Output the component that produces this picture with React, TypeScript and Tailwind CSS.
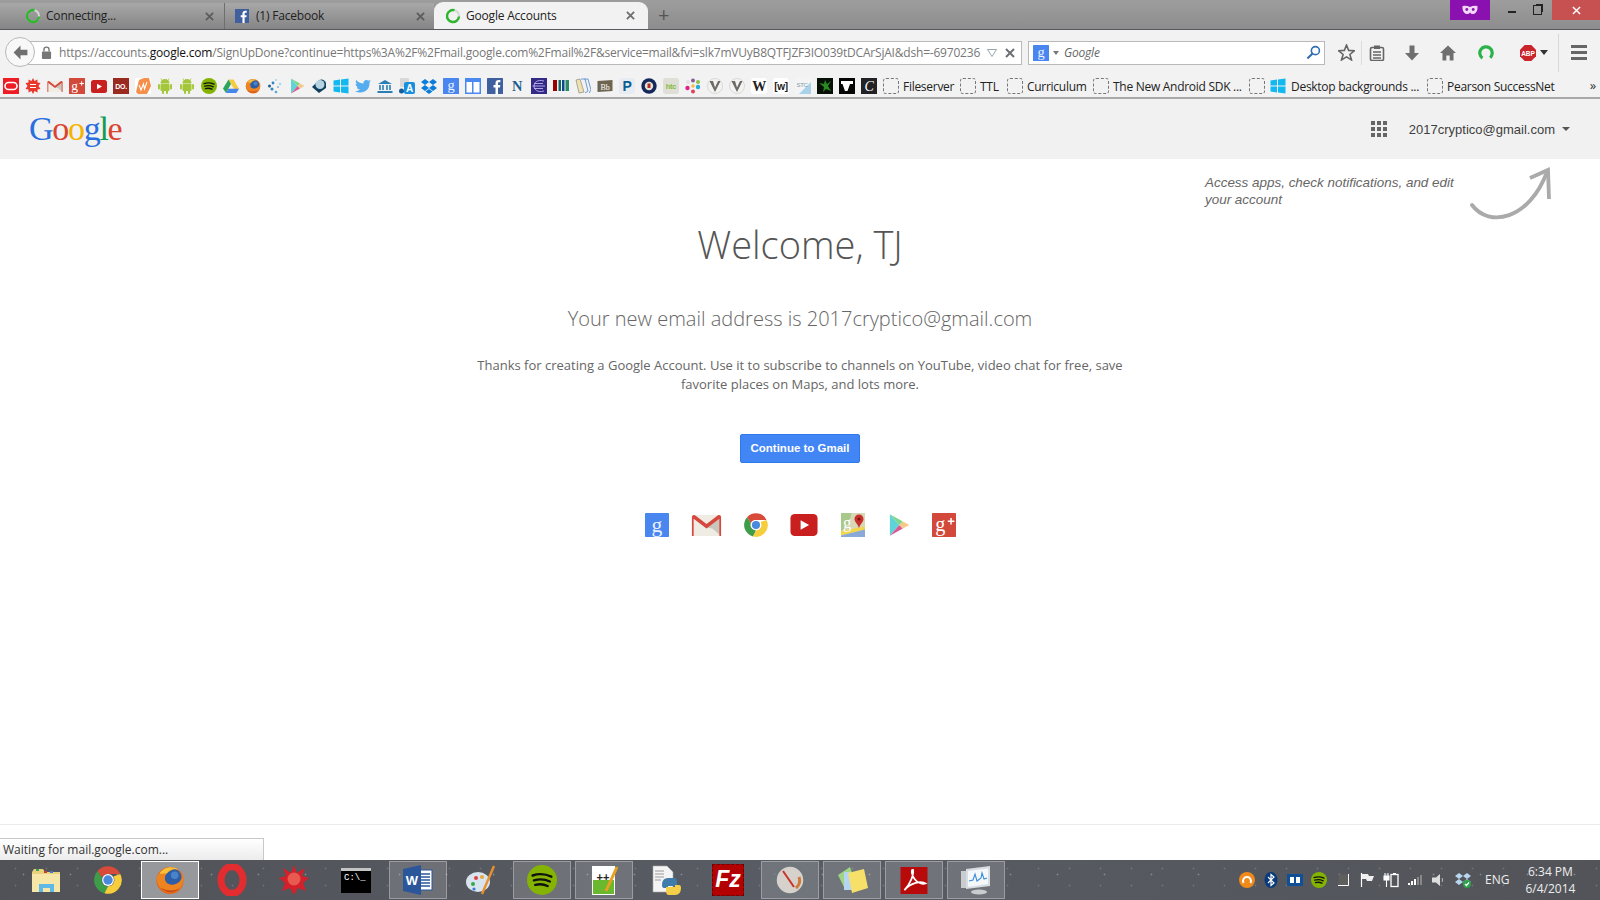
import React from "react";

type IconProps = { className?: string };

function GIcon({ className = "w-4 h-4" }: IconProps) {
    return (
        <svg viewBox="0 0 16 16" className={className}>
            <rect width="16" height="16" rx="0.5" fill="#4a86f0" />
            <text x="8" y="12.4" textAnchor="middle" fontSize="14.4" fontFamily="Liberation Serif, serif" fill="#eaf1ff">
                g
            </text>
        </svg>
    );
}

function GmailIcon({ className = "w-4 h-4" }: IconProps) {
    return (
        <svg viewBox="0 0 16 12" className={className}>
            <rect x="0.5" y="0.5" width="15" height="11" rx="0.8" fill="#efece4" />
            <path d="M8 7 L15 1 V11 L11 7.5 Z" fill="#c9c6bd" />
            <path d="M1.3 11.5 V2.5 L8 7.6 L14.7 2.5 V11.5 H15.6 V1.4 Q15.4 0.3 14 0.6 L8 5.2 L2 0.6 Q0.6 0.3 0.4 1.4 V11.5 Z" fill="#d6483e" />
        </svg>
    );
}

function ChromeIcon({ className = "w-4 h-4" }: IconProps) {
    return (
        <svg viewBox="0 0 16 16" className={className}>
            <path d="M8 0.2 A7.8 7.8 0 0 1 15 4.6 H8 A3.6 3.6 0 0 0 4.6 6.7 L2 2.9 A7.8 7.8 0 0 1 8 0.2 Z" fill="#d84a3a" />
            <path d="M2 2.9 L4.6 6.7 A3.6 3.6 0 0 0 8 11.6 L6 15.6 A7.8 7.8 0 0 1 2 2.9 Z" fill="#3f9d4a" />
            <path d="M15 4.6 A7.8 7.8 0 0 1 6 15.6 L8 11.6 A3.6 3.6 0 0 0 11 6 Z" fill="#f6cd3a" />
            <circle cx="8" cy="8" r="3.4" fill="#fff" />
            <circle cx="8" cy="8" r="2.7" fill="#4a89dc" />
        </svg>
    );
}

function YoutubeIcon({ className = "w-4 h-4" }: IconProps) {
    return (
        <svg viewBox="0 0 16 13" className={className}>
            <rect width="16" height="13" y="0" rx="2.5" fill="#c9201f" />
            <path d="M6 3.7 L11 6.5 L6 9.3 Z" fill="#fff" />
        </svg>
    );
}

function GplusIcon({ className = "w-4 h-4" }: IconProps) {
    return (
        <svg viewBox="0 0 16 16" className={className}>
            <rect width="16" height="16" rx="0.5" fill="#d2483a" />
            <text x="5.6" y="12" textAnchor="middle" fontSize="13.5" fontFamily="Liberation Serif, serif" fill="#fff">
                g
            </text>
            <path d="M10.5 5.5 h4.4 M12.7 3.3 v4.4" stroke="#fff" strokeWidth="1" />
        </svg>
    );
}

function PlayIcon({ className = "w-4 h-4" }: IconProps) {
    return (
        <svg viewBox="0 0 16 16" className={className}>
            <path d="M2 0.5 L8.5 8 L2 15.5 Z" fill="#5fd3d8" />
            <path d="M2 0.5 L11 5.5 L8.5 8 Z" fill="#7ed68a" />
            <path d="M2 15.5 L11 10.5 L8.5 8 Z" fill="#d85a93" />
            <path d="M11 5.5 L15.5 8 L11 10.5 L8.5 8 Z" fill="#f5c98a" />
        </svg>
    );
}

function MapsIcon({ className = "w-4 h-4" }: IconProps) {
    return (
        <svg viewBox="0 0 16 16" className={className}>
            <rect width="16" height="16" fill="#d8d8b8" />
            <path d="M0 0 H7 L5 9 L0 12 Z" fill="#a9c98a" />
            <path d="M0 12 L16 9 V11 L0 15 Z" fill="#f4d649" />
            <path d="M0 15 L16 11 V16 H0 Z" fill="#8aa8d8" />
            <text x="4" y="10" textAnchor="middle" fontSize="11" fontFamily="Liberation Serif, serif" fill="#fff">
                g
            </text>
            <path d="M12 1 a3 3 0 0 1 3 3 c0 2 -2 3 -3 6 c-1 -3 -3 -4 -3 -6 a3 3 0 0 1 3 -3 Z" fill="#c9302c" />
            <circle cx="12" cy="4" r="1" fill="#7a1512" />
        </svg>
    );
}

function FirefoxIcon({ className = "w-4 h-4" }: IconProps) {
    return (
        <svg viewBox="0 0 32 32" className={className}>
            <circle cx="16" cy="16.5" r="14.5" fill="#e2681c" />
            <circle cx="18" cy="14" r="10.5" fill="#2d5ea8" />
            <circle cx="21" cy="11" r="4" fill="#4a84c8" />
            <path d="M1.8 14 C2 26 14 33 24 27 C30 23 32 14 29.5 8 C29.5 16 25 21 18 21 C12 21 9.5 16.5 11 11.5 C12.5 8 15.5 6 19 5 C13 1 4 6 1.8 14 Z" fill="#ee8420" />
            <path d="M5 9 C9 2 19 0.5 25 5 C20 3.5 15 5 12.5 9 C10 9 7 9.5 5 9 Z" fill="#f7c23a" />
            <path d="M6 24 C11 30 20 31 26 25 C20 28 12 28 6 24 Z" fill="#c94a14" />
        </svg>
    );
}

function SpotifyIcon({ className = "w-4 h-4" }: IconProps) {
    return (
        <svg viewBox="0 0 16 16" className={className}>
            <circle cx="8" cy="8" r="8" fill="#84b401" />
            <path d="M3 5.6 C6 4.6 10 4.8 13 6.2 M3.7 8.2 C6.5 7.4 9.7 7.6 12.2 8.8 M4.4 10.6 C6.7 10 9 10.2 11 11.2" stroke="#111" strokeWidth="1.3" fill="none" strokeLinecap="round" />
        </svg>
    );
}

function AndroidIcon({ className = "w-4 h-4" }: IconProps) {
    return (
        <svg viewBox="0 0 16 16" className={className}>
            <path d="M3.5 5.5 a4.5 4.5 0 0 1 9 0 Z" fill="#a4c639" />
            <path d="M4.8 2 L3.8 0.4 M11.2 2 L12.2 0.4" stroke="#a4c639" strokeWidth="0.7" />
            <rect x="3.5" y="6" width="9" height="7" rx="1" fill="#a4c639" />
            <rect x="1" y="6" width="1.9" height="5.5" rx="0.9" fill="#a4c639" />
            <rect x="13.1" y="6" width="1.9" height="5.5" rx="0.9" fill="#a4c639" />
            <rect x="5" y="12" width="2" height="4" rx="1" fill="#a4c639" />
            <rect x="9" y="12" width="2" height="4" rx="1" fill="#a4c639" />
        </svg>
    );
}

function WindowsIcon({ className = "w-4 h-4" }: IconProps) {
    return (
        <svg viewBox="0 0 16 16" className={className}>
            <path d="M0.5 2.5 L7 1.6 V7.5 H0.5 Z M8 1.4 L15.5 0.4 V7.5 H8 Z M0.5 8.5 H7 V14.4 L0.5 13.5 Z M8 8.5 H15.5 V15.6 L8 14.6 Z" fill="#12b8ef" />
        </svg>
    );
}

function DashedIcon() {
    return <span className="w-4 h-4 rounded-[3px] border border-dashed border-[#777] shrink-0" />;
}

function SpinnerRing({ className = "w-4 h-4" }: IconProps) {
    return (
        <svg viewBox="0 0 16 16" className={className}>
            <circle cx="8" cy="8" r="6" fill="none" stroke="#d4d9d4" strokeWidth="2" />
            <path d="M9.5 2.2 A6 6 0 1 0 14 8.5" fill="none" stroke="#2fb62f" strokeWidth="2.4" />
        </svg>
    );
}

function LetterIcon({ bg, color, text, size = 9, serif, rounded }: { bg: string; color: string; text: string; size?: number; serif?: boolean; rounded?: boolean }) {
    return (
        <svg viewBox="0 0 16 16" className="w-4 h-4">
            <rect width="16" height="16" rx={rounded ? 3 : 0} fill={bg} />
            <text
                x="8"
                y={8 + size * 0.36}
                textAnchor="middle"
                fontSize={size}
                fontWeight="700"
                fontFamily={serif ? "Liberation Serif, serif" : "Liberation Sans, sans-serif"}
                fill={color}
            >
                {text}
            </text>
        </svg>
    );
}

function Svg16({ children }: { children: React.ReactNode }) {
    return (
        <svg viewBox="0 0 16 16" className="w-4 h-4">
            {children}
        </svg>
    );
}

const VShield = (
    <Svg16>
        <circle cx="8" cy="8" r="7.5" fill="#f3f3f1" stroke="#c8c8c8" strokeWidth="0.6" />
        <path d="M2.5 3 L8 14 L13.5 3 H11 L8 9.5 L6 3 Z" fill="#6e6a66" />
    </Svg16>
);

const bookmarkIcons: React.ReactNode[] = [
    <Svg16>
        <rect width="16" height="16" fill="#ee1c25" />
        <rect x="2" y="4.5" width="12" height="7" rx="3.5" fill="none" stroke="#fff" strokeWidth="1.6" />
    </Svg16>,
    <Svg16>
        <path d="M8 0 L9.5 3 L12.5 1.5 L12.5 4.5 L15.5 5 L13.5 8 L15.5 11 L12.5 11.5 L12.5 14.5 L9.5 13 L8 16 L6.5 13 L3.5 14.5 L3.5 11.5 L0.5 11 L2.5 8 L0.5 5 L3.5 4.5 L3.5 1.5 L6.5 3 Z" fill="#e8392b" />
        <path d="M5 6.5 H11 M5 9.5 H11" stroke="#fff" strokeWidth="1.2" />
    </Svg16>,
    <GmailIcon className="w-4 h-[13px]" />,
    <GplusIcon />,
    <YoutubeIcon className="w-4 h-[13px]" />,
    <LetterIcon bg="#9a2a20" color="#fff" text="DO." size={7} />,
    <Svg16>
        <rect width="16" height="16" fill="#fff" />
        <path d="M1 14 L4 2 L9 0 L14 0 L16 8 L12 16 H3 Z" fill="#f58f4a" />
        <path d="M4 7 L6 12 L8.5 6 L9.5 11 L12 4" fill="none" stroke="#fff" strokeWidth="1.1" />
    </Svg16>,
    <AndroidIcon />,
    <AndroidIcon />,
    <SpotifyIcon />,
    <Svg16>
        <path d="M5.5 1.5 H10.5 L16 11 H11 Z" fill="#f7c93e" />
        <path d="M5.5 1.5 L8 6 L3 15 L0 10.5 Z" fill="#2aa55a" />
        <path d="M3 15 L5.5 10.8 H16 L13.4 15 Z" fill="#4585ee" />
    </Svg16>,
    <FirefoxIcon />,
    <Svg16>
        <circle cx="2.5" cy="8" r="1.5" fill="#1f5c8f" />
        <circle cx="5" cy="11" r="1.5" fill="#2e83c1" />
        <circle cx="9" cy="14" r="1.3" fill="#55a5dc" />
        <circle cx="9" cy="2" r="1.1" fill="#a9d5ee" />
        <circle cx="13" cy="6" r="1.3" fill="#a9d5ee" />
        <circle cx="11" cy="9" r="1.1" fill="#7dbbe3" />
        <circle cx="6" cy="5" r="1.4" fill="#2e83c1" />
    </Svg16>,
    <PlayIcon />,
    <Svg16>
        <path d="M1 9 L8 2 Q13 0 15 5 L15 10 L8 15 Z" fill="#10405e" />
        <circle cx="9" cy="6.5" r="4.5" fill="#b7d3e2" />
    </Svg16>,
    <WindowsIcon />,
    <Svg16>
        <path d="M16 3 C15 3.6 14.6 3.7 14 3.8 C14.8 3.3 15.3 2.6 15.5 1.8 C14.8 2.3 14 2.6 13.2 2.7 C11.5 1 8 2.4 8.5 5.6 C5.5 5.5 3 4 1.2 2 C0.4 3.5 0.8 5.3 2.2 6.2 C1.6 6.2 1.1 6 0.6 5.8 C0.6 7.5 1.7 8.8 3.3 9.2 C2.8 9.3 2.3 9.4 1.8 9.3 C2.2 10.6 3.5 11.6 5 11.6 C3.5 12.8 1.8 13.2 0 13.1 C7 17 15 13 14.5 4.6 C15.1 4.2 15.6 3.6 16 3 Z" fill="#55acee" />
    </Svg16>,
    <Svg16>
        <path d="M8 2 L15 6 H1 Z" fill="#2a7fb5" />
        <path d="M3 7 v5 M6 7 v5 M10 7 v5 M13 7 v5" stroke="#2a7fb5" strokeWidth="1.6" />
        <rect x="0.5" y="13" width="15" height="2" fill="#2a7fb5" />
    </Svg16>,
    <Svg16>
        <rect x="1" y="0" width="9" height="9" rx="1" fill="#d8d8d8" />
        <rect x="5" y="4" width="11" height="12" rx="2" fill="#1a8fdc" />
        <circle cx="2.5" cy="13" r="2.5" fill="#105ea0" />
        <text x="10.5" y="14" textAnchor="middle" fontSize="10" fontWeight="700" fontFamily="Liberation Sans, sans-serif" fill="#fff">
            A
        </text>
    </Svg16>,
    <Svg16>
        <path d="M4 1 L8 4 L4 7 L0 4 Z M12 1 L16 4 L12 7 L8 4 Z M4 7 L8 10 L4 13 L0 10 Z M12 7 L16 10 L12 13 L8 10 Z M4.5 13.5 L8 11 L11.5 13.5 L8 16 Z" fill="#0a7ddb" />
    </Svg16>,
    <GIcon />,
    <Svg16>
        <rect width="16" height="16" fill="#4a8af0" />
        <rect x="1.5" y="4" width="5.5" height="10.5" fill="#fff" />
        <rect x="8.5" y="4" width="6" height="10.5" fill="#fff" />
    </Svg16>,
    <Svg16>
        <rect width="16" height="16" rx="0.5" fill="#3f5f9f" />
        <path d="M11 16 V9.5 H13 L13.3 7 H11 V5.5 C11 4.7 11.3 4.2 12.3 4.2 H13.4 V2 C13 2 12.4 1.9 11.6 1.9 C9.8 1.9 8.5 3 8.5 5.1 V7 H6.5 V9.5 H8.5 V16 Z" fill="#fff" />
    </Svg16>,
    <LetterIcon bg="#f2f2f2" color="#1d5c8f" text="N" size={14.4} serif />,
    <Svg16>
        <rect width="16" height="16" fill="#332a86" />
        <path d="M13 3 C6 1 3 5 3 8 C3 11 6 15 13 13 M1.5 8 H14 M3 5.5 H12 M3 10.5 H12" stroke="#bfb3f0" strokeWidth="0.9" fill="none" />
    </Svg16>,
    <Svg16>
        <rect y="2" width="4" height="11" fill="#900" />
        <rect x="5.5" y="2" width="2.5" height="11" fill="#0a6b6b" />
        <rect x="9" y="2" width="2.5" height="11" fill="#148" />
        <rect x="12.5" y="2" width="3.5" height="11" fill="#2a8a6a" />
    </Svg16>,
    <Svg16>
        <path d="M1 2 L5 1 L9 14 L4 15 Z" fill="#f0e2b0" stroke="#777" strokeWidth="0.6" />
        <path d="M6 1 L10 1 L13 13 L10 15 M9.5 1 L13 1 L16 12 L14 15" fill="none" stroke="#5c8fd0" strokeWidth="0.9" />
    </Svg16>,
    <Svg16>
        <path d="M0.5 3 L15.5 2 V13 L0.5 14 Z" fill="#6e6550" />
        <text x="8" y="11.5" textAnchor="middle" fontSize="8" fontFamily="Liberation Serif, serif" fill="#fff">
            Bb
        </text>
    </Svg16>,
    <LetterIcon bg="#e6ecf1" color="#0d5d91" text="P" size={14} rounded />,
    <Svg16>
        <circle cx="8" cy="8" r="7.7" fill="#14285c" />
        <circle cx="8" cy="8" r="4.2" fill="#e8e4d2" />
        <rect x="6.5" y="5.5" width="3" height="4.5" fill="#b02a2a" />
    </Svg16>,
    <LetterIcon bg="#dfdfd8" color="#86ba3c" text="htc" size={7.5} rounded />,
    <Svg16>
        <circle cx="3" cy="4" r="2" fill="#e3e3e3" />
        <circle cx="8" cy="2.5" r="2" fill="#8a5a9a" />
        <circle cx="13" cy="4" r="2" fill="#8ac24a" />
        <circle cx="2.5" cy="10" r="2.2" fill="#e0208a" />
        <circle cx="8" cy="8" r="1.8" fill="#f0c040" />
        <circle cx="13" cy="9" r="2.2" fill="#26a8e0" />
        <circle cx="8" cy="13.5" r="2" fill="#e04060" />
    </Svg16>,
    VShield,
    VShield,
    <LetterIcon bg="#ffffff" color="#222" text="W" size={14} serif rounded />,
    <LetterIcon bg="#ffffff" color="#222" text="[w]" size={10} rounded />,
    <Svg16>
        <rect width="16" height="16" fill="#f4f4f4" />
        <path d="M4 16 L16 4 V16 Z" fill="#a8d2ea" />
        <text x="7" y="9" textAnchor="middle" fontSize="6" fontFamily="Liberation Sans, sans-serif" fill="#7b98aa">
            STC
        </text>
    </Svg16>,
    <Svg16>
        <rect width="16" height="16" fill="#061006" />
        <path d="M8 2 L10 6 L14 3 L11 8 L14 13 L9 11 L6 14 L7 9 L2 5 L7 6 Z" fill="#2a8a22" />
    </Svg16>,
    <Svg16>
        <rect width="16" height="16" fill="#050505" />
        <path d="M2 3 H14 V6 H11 L8.5 13 H6 L3.5 6 H2 Z" fill="#fff" />
    </Svg16>,
    <Svg16>
        <rect width="16" height="16" fill="#222226" />
        <text x="8" y="13" textAnchor="middle" fontSize="14" fontStyle="italic" fontFamily="Liberation Serif, serif" fill="#fff">
            C
        </text>
    </Svg16>,
];

function TabClose({ color }: { color: string }) {
    return (
        <svg viewBox="0 0 10 10" className="w-[9px] h-[9px] shrink-0">
            <path d="M1 1 L9 9 M9 1 L1 9" stroke={color} strokeWidth="2" />
        </svg>
    );
}

function TabStrip() {
    return (
        <div className="h-[30px] bg-gradient-to-b from-[#9d9d9d] to-[#8d8d8d] border-b border-[#55585c] flex text-[12px] tracking-[-0.2px] text-[#222] font-['Open_Sans',sans-serif] shrink-0">
            <div className="w-[225px] h-[26px] mt-[3px] flex items-center pl-[25px] border-r border-[#6e6e6e] bg-gradient-to-b from-[#a8a8a8] to-[#858585]">
                <SpinnerRing className="w-[16px] h-[16px]" />
                <span className="ml-[5px] w-[159px]">Connecting...</span>
                <TabClose color="#5c5c5c" />
            </div>
            <div className="w-[209px] h-[26px] mt-[3px] flex items-center pl-[10px] bg-gradient-to-b from-[#a8a8a8] to-[#858585]">
                <svg viewBox="0 0 16 16" className="w-[14px] h-[16px]">
                    <rect width="16" height="16" fill="#3f5f9f" />
                    <path d="M11 16 V9.5 H13 L13.3 7 H11 V5.5 C11 4.7 11.3 4.2 12.3 4.2 H13.4 V2 C13 2 12.4 1.9 11.6 1.9 C9.8 1.9 8.5 3 8.5 5.1 V7 H6.5 V9.5 H8.5 V16 Z" fill="#fff" />
                </svg>
                <span className="ml-[7px] w-[160px]">(1) Facebook</span>
                <TabClose color="#5c5c5c" />
            </div>
            <div className="w-[214px] h-[27px] mt-[2px] flex items-center pl-[11px] bg-[#f2f2f2] rounded-t-[9px]">
                <SpinnerRing className="w-[16px] h-[16px]" />
                <span className="ml-[5px] w-[160px]">Google Accounts</span>
                <TabClose color="#6e6e6e" />
            </div>
            <span className="ml-[10px] mt-[2px] text-[#555] text-[20px] leading-[26px]">+</span>
            <div className="ml-auto flex items-start h-[20px]">
                <div className="w-[40px] h-[20px] bg-[#8a10b0] flex items-center justify-center">
                    <svg viewBox="0 0 16 10" className="w-[16px] h-[10px]">
                        <path d="M0.5 1 Q4 0 8 2 Q12 0 15.5 1 Q16 7 12 9 Q9 9.5 8 7.5 Q7 9.5 4 9 Q0 7 0.5 1 Z" fill="#f1d8f8" />
                        <circle cx="4.8" cy="4.5" r="1.4" fill="#8a10b0" />
                        <circle cx="11.2" cy="4.5" r="1.4" fill="#8a10b0" />
                    </svg>
                </div>
                <div className="w-[62px] flex items-center h-[20px] text-[#222]">
                    <span className="ml-[18px] mt-[3px] w-[8px] h-[2px] bg-[#222]" />
                    <span className="ml-[17px] w-[9px] h-[10px] border border-[#222] shadow-[2px_-2px_0_-1px_#222]" />
                </div>
                <div className="w-[48px] h-[20px] bg-[#c75050] flex items-center justify-center">
                    <svg viewBox="0 0 10 10" className="w-[9px] h-[9px]">
                        <path d="M1 1 L9 9 M9 1 L1 9" stroke="#fff" strokeWidth="1.6" />
                    </svg>
                </div>
            </div>
        </div>
    );
}

function NavBar() {
    return (
        <div className="h-[42px] pt-[3px] bg-[#f2f2f2] flex items-center relative shrink-0 font-['Open_Sans',sans-serif]">
            <div className="absolute left-[5px] top-[7px] w-[30px] h-[30px] rounded-full bg-[#f8f8f8] border border-[#b8b8b8] flex items-center justify-center z-10">
                <svg viewBox="0 0 16 16" className="w-[17px] h-[17px]">
                    <path d="M8 1.5 L1.5 8 L8 14.5 V10.5 H14.5 V5.5 H8 Z" fill="#707070" />
                </svg>
            </div>
            <div className="ml-[28px] w-[994px] h-[24px] bg-white border border-[#b9b9b9] flex items-center pl-[12px] pr-[5px]">
                <svg viewBox="0 0 12 14" className="w-[11px] h-[13px] shrink-0">
                    <rect x="1" y="6" width="10" height="8" rx="1" fill="#777" />
                    <path d="M3.2 6 V4 a2.8 2.8 0 0 1 5.6 0 V6" fill="none" stroke="#777" strokeWidth="1.5" />
                </svg>
                <span className="ml-[7px] w-[923px] text-[12px] tracking-[-0.2px] text-[#777] whitespace-nowrap">
                    https://accounts.<span className="text-[#111]">google.com</span>/SignUpDone?continue=https%3A%2F%2Fmail.google.com%2Fmail%2F&service=mail&fvi=slk7mVUyB8QTFJZF3IO039tDCArSjAI&dsh=-6970236
                </span>
                <svg viewBox="0 0 10 8" className="ml-[5px] w-[10px] h-[8px] shrink-0">
                    <path d="M0.5 0.5 H9.5 L5 7.5 Z" fill="none" stroke="#9aa5ad" />
                </svg>
                <svg viewBox="0 0 10 10" className="ml-[8px] w-[10px] h-[10px] shrink-0">
                    <path d="M1 1 L9 9 M9 1 L1 9" stroke="#6a7076" strokeWidth="2" />
                </svg>
            </div>
            <div className="ml-[6px] w-[297px] h-[24px] bg-white border border-[#b9b9b9] flex items-center pl-[4px] pr-[3px]">
                <GIcon />
                <span className="ml-[4px] w-0 h-0 border-x-[3px] border-x-transparent border-t-[4px] border-t-[#777]" />
                <span className="ml-[5px] flex-1 text-[12px] tracking-[-0.2px] italic text-[#666]">Google</span>
                <svg viewBox="0 0 16 16" className="w-[15px] h-[15px]">
                    <circle cx="10" cy="6" r="4.3" fill="none" stroke="#2f6fb0" strokeWidth="1.7" />
                    <path d="M7 9 L1.5 14.5" stroke="#2f6fb0" strokeWidth="2.2" />
                </svg>
            </div>
            <svg viewBox="0 0 16 16" className="ml-[13px] w-[17px] h-[17px]">
                <path d="M8 1 L10 6 L15.5 6.3 L11.2 9.8 L12.7 15 L8 12.1 L3.3 15 L4.8 9.8 L0.5 6.3 L6 6 Z" fill="none" stroke="#666" strokeWidth="1.5" />
            </svg>
            <span className="ml-[6px] w-px h-[24px] bg-[#dcdcdc]" />
            <svg viewBox="0 0 16 16" className="ml-[7px] w-4 h-4">
                <rect x="1.5" y="2.5" width="13" height="13" rx="1.5" fill="none" stroke="#666" strokeWidth="1.6" />
                <rect x="5" y="0.5" width="6" height="3.5" fill="#666" />
                <path d="M4 7 H12 M4 10 H12 M4 13 H12" stroke="#666" strokeWidth="1.3" />
            </svg>
            <svg viewBox="0 0 16 16" className="ml-[19px] w-4 h-4">
                <path d="M5.5 0.5 H10.5 V8 H15 L8 15.5 L1 8 H5.5 Z" fill="#6f6f6f" />
            </svg>
            <svg viewBox="0 0 16 16" className="ml-[20px] w-4 h-4">
                <path d="M8 0.5 L16 8 H13.5 V15.5 H9.7 V10.5 H6.3 V15.5 H2.5 V8 H0 Z" fill="#6f6f6f" />
            </svg>
            <svg viewBox="0 0 16 18" className="ml-[22px] w-[16px] h-[18px]">
                <circle cx="8" cy="9" r="6.2" fill="none" stroke="#2db24a" strokeWidth="3.2" strokeDasharray="30 9" transform="rotate(125 8 9)" />
            </svg>
            <svg viewBox="0 0 16 16" className="ml-[26px] w-4 h-4">
                <path d="M4.7 0 H11.3 L16 4.7 V11.3 L11.3 16 H4.7 L0 11.3 V4.7 Z" fill="#c9252b" />
                <text x="8" y="10.5" textAnchor="middle" fontSize="6.5" fontWeight="700" fontFamily="Liberation Sans, sans-serif" fill="#fff">
                    ABP
                </text>
            </svg>
            <span className="ml-[4px] w-0 h-0 border-x-[4px] border-x-transparent border-t-[5px] border-t-[#333]" />
            <span className="ml-[10px] w-px h-[38px] bg-[#d8d8d8]" />
            <span className="ml-[12px] flex flex-col gap-[3px]">
                <span className="w-[16px] h-[3px] bg-[#666]" />
                <span className="w-[16px] h-[3px] bg-[#666]" />
                <span className="w-[16px] h-[3px] bg-[#666]" />
            </span>
        </div>
    );
}

function BookmarkLink({ icon, label, width }: { icon?: React.ReactNode; label: string; width: string }) {
    return (
        <div className={`flex items-center gap-[4px] shrink-0 ${width}`}>
            {icon ?? <DashedIcon />}
            <span className="whitespace-nowrap mt-[2px]">{label}</span>
        </div>
    );
}

function BookmarksBar() {
    return (
        <div className="h-[27px] bg-[#f2f2f2] border-b-2 border-[#a9a9a9] flex items-center pl-[3px] pt-[3px] text-[12px] tracking-[-0.28px] text-[#222] font-['Open_Sans',sans-serif] shrink-0">
            <div className="flex gap-[6px] w-[880px] shrink-0">
                {bookmarkIcons.map((icon, i) => (
                    <span key={i} className="w-4 h-4 flex items-center justify-center shrink-0">
                        {icon}
                    </span>
                ))}
            </div>
            <BookmarkLink label="Fileserver" width="w-[77px]" />
            <BookmarkLink label="TTL" width="w-[47px]" />
            <BookmarkLink label="Curriculum" width="w-[86px]" />
            <BookmarkLink label="The New Android SDK ..." width="w-[156px]" />
            <div className="flex items-center gap-[5px] w-[178px] shrink-0">
                <DashedIcon />
                <WindowsIcon />
                <span className="whitespace-nowrap mt-[2px]">Desktop backgrounds ...</span>
            </div>
            <BookmarkLink label="Pearson SuccessNet" width="w-[142px]" />
            <span className="ml-auto mr-[4px] text-[#333] text-[13px]">»</span>
        </div>
    );
}

function AccountHeader() {
    return (
        <div className="h-[60px] bg-[#f1f1f1] flex items-center pl-[29px] shrink-0">
            <div className="text-[34px] leading-none tracking-[-1.3px] font-['Liberation_Serif',serif]">
                <span className="text-[#2a6fe0]">G</span>
                <span className="text-[#d9432f]">o</span>
                <span className="text-[#f4b400]">o</span>
                <span className="text-[#2a6fe0]">g</span>
                <span className="text-[#129b55]">l</span>
                <span className="text-[#d9432f]">e</span>
            </div>
            <div className="ml-auto mr-[30px] flex items-center font-['Liberation_Sans',sans-serif]">
                <div className="grid grid-cols-3 gap-[2px] mr-[22px]">
                    {Array.from({ length: 9 }).map((_, i) => (
                        <span key={i} className="w-[4px] h-[4px] bg-[#666]" />
                    ))}
                </div>
                <span className="mt-[2px] text-[13px] text-[#404040]">2017cryptico@gmail.com</span>
                <span className="ml-[7px] w-0 h-0 border-x-[4px] border-x-transparent border-t-[4px] border-t-[#555]" />
            </div>
        </div>
    );
}

function MainContent() {
    return (
        <div className="relative flex-1 bg-white flex flex-col items-center">
            <div className="absolute left-[1205px] top-[15px] w-[260px] text-[13.45px] leading-[17px] italic text-[#666] font-['Liberation_Sans',sans-serif]">
                Access apps, check notifications, and edit your account
            </div>
            <svg viewBox="0 0 90 60" className="absolute left-[1467px] top-[5px] w-[90px] h-[60px]">
                <path d="M5 41 C22 64 62 56 80 8" fill="none" stroke="#aaa" strokeWidth="3.8" strokeLinecap="round" />
                <path d="M63 14 L81 6 L82 35" fill="none" stroke="#aaa" strokeWidth="3.8" />
            </svg>

            <h1 className="mt-[59px] text-[38px] leading-[52px] font-light text-[#555] font-['Open_Sans',sans-serif]">Welcome, TJ</h1>
            <h2 className="mt-[34px] text-[20px] leading-[30px] font-light text-[#666] font-['Open_Sans',sans-serif]">
                Your new email address is 2017cryptico@gmail.com
            </h2>
            <p className="mt-[22px] w-[680px] text-center text-[13px] leading-[19px] text-[#666] font-['Open_Sans',sans-serif]">
                Thanks for creating a Google Account. Use it to subscribe to channels on YouTube, video chat for free, save favorite places on Maps, and lots more.
            </p>
            <button className="mt-[40px] w-[120px] h-[29px] bg-[#4285f4] border border-[#3079ed] rounded-[2px] text-white text-[11.5px] font-bold font-['Liberation_Sans',sans-serif]">
                Continue to Gmail
            </button>
            <div className="mt-[50px] flex items-center gap-[22px]">
                <GIcon className="w-[24px] h-[24px]" />
                <GmailIcon className="w-[31px] h-[23px]" />
                <ChromeIcon className="w-[24px] h-[24px]" />
                <YoutubeIcon className="w-[28px] h-[22px]" />
                <MapsIcon className="ml-[1px] w-[24px] h-[24px]" />
                <PlayIcon className="w-[23px] h-[24px]" />
                <GplusIcon className="w-[24px] h-[24px]" />
            </div>

            <div className="mt-auto w-full h-[36px] border-t border-[#ebebeb]" />
            <div className="absolute left-0 bottom-0 w-[264px] h-[22px] border-t border-r border-[#c8c8c8] bg-gradient-to-b from-white to-[#ececec] pl-[3px] text-[12px] leading-[21px] text-[#333] font-['Open_Sans',sans-serif]">
                Waiting for mail.google.com...
            </div>
        </div>
    );
}

const taskbarIcons: { active?: "bright" | "dim"; icon: React.ReactNode }[] = [
    {
        icon: (
            <svg viewBox="0 0 32 32" className="w-8 h-8">
                <path d="M2 8 L4 5 H13 L15 8 H30 V28 H2 Z" fill="#e9d27e" />
                <rect x="2" y="10" width="28" height="18" fill="#f6e7a8" />
                <rect x="6" y="5" width="3" height="2" fill="#3aa64a" />
                <rect x="14" y="7" width="3" height="2" fill="#cf3a30" />
                <rect x="20" y="7" width="3" height="2" fill="#3a7ad8" />
                <path d="M9 28 V20 H24 V28 H20 V24 H13 V28 Z" fill="#5eb8e8" />
            </svg>
        ),
    },
    { icon: <ChromeIcon className="w-[28px] h-[28px]" /> },
    { active: "bright", icon: <FirefoxIcon className="w-[30px] h-[30px]" /> },
    {
        icon: (
            <svg viewBox="0 0 32 32" className="w-8 h-8">
                <ellipse cx="16" cy="16" rx="11" ry="13.5" fill="none" stroke="#e22c2f" strokeWidth="7" />
            </svg>
        ),
    },
    {
        icon: (
            <svg viewBox="0 0 32 32" className="w-8 h-8">
                <path d="M16 1 L19 9 L27 4 L24 12 L31 14 L25 19 L28 27 L20 24 L16 31 L12 24 L4 27 L7 19 L1 14 L8 12 L5 4 L13 9 Z" fill="#d3202a" />
                <circle cx="16" cy="15" r="6.5" fill="#e85a50" />
            </svg>
        ),
    },
    {
        icon: (
            <div className="w-[30px] h-[25px] bg-black border-t-[3px] border-[#c4c4c4] text-white text-[9px] leading-[14px] pl-[3px] font-['Liberation_Mono',monospace]">C:\_</div>
        ),
    },
    {
        active: "dim",
        icon: (
            <svg viewBox="0 0 32 32" className="w-8 h-8">
                <rect x="14" y="6" width="16" height="20" fill="#fff" stroke="#2b579a" />
                <path d="M17 10 H28 M17 13 H28 M17 16 H28 M17 19 H28 M17 22 H28" stroke="#2b579a" strokeWidth="1.4" />
                <path d="M1 5 L19 1 V31 L1 27 Z" fill="#2b579a" />
                <text x="10" y="21" textAnchor="middle" fontSize="13" fontWeight="700" fontFamily="Liberation Sans, sans-serif" fill="#fff">
                    W
                </text>
            </svg>
        ),
    },
    {
        icon: (
            <svg viewBox="0 0 32 32" className="w-8 h-8">
                <ellipse cx="14" cy="18" rx="12" ry="10" fill="#d8e4ee" />
                <circle cx="9" cy="20" r="2" fill="#3aa64a" />
                <circle cx="12" cy="14" r="2" fill="#e04040" />
                <circle cx="18" cy="13" r="2" fill="#e8a83a" />
                <circle cx="10" cy="25" r="1.6" fill="#3a7ad8" />
                <path d="M30 2 L18 30" stroke="#e89030" strokeWidth="2.4" />
            </svg>
        ),
    },
    { active: "dim", icon: <SpotifyIcon className="w-[30px] h-[30px]" /> },
    {
        active: "dim",
        icon: (
            <svg viewBox="0 0 32 32" className="w-8 h-8">
                <rect x="4" y="2" width="23" height="29" fill="#fff" />
                <rect x="5" y="16" width="21" height="14" fill="#6ab82e" />
                <text x="15" y="17" textAnchor="middle" fontSize="11" fontWeight="700" fontFamily="Liberation Sans, sans-serif" fill="#222">
                    ++
                </text>
                <path d="M29 3 L18 27" stroke="#e8a020" strokeWidth="3" />
            </svg>
        ),
    },
    {
        icon: (
            <svg viewBox="0 0 32 32" className="w-8 h-8">
                <path d="M3 2 H17 L23 8 V28 H3 Z" fill="#f4f4f4" stroke="#aaa" strokeWidth="0.6" />
                <path d="M5 7 H14 M5 10 H14 M5 13 H14 M5 16 H11" stroke="#999" />
                <path d="M12 21 Q12 14 18 14 H24 Q27 14 27 18 V22 H18 V24 H14 Q12 24 12 21 Z" fill="#3f7cac" />
                <path d="M31 24 Q31 31 25 31 H19 Q16 31 16 27 V23 H25 V21 H29 Q31 21 31 24 Z" fill="#f4ce48" />
            </svg>
        ),
    },
    {
        icon: (
            <div className="w-[32px] h-[32px] bg-[#b30000] border border-dashed border-[#6e0000] text-white font-['Liberation_Sans',sans-serif] font-bold italic text-[23px] leading-[29px] text-center">
                Fz
            </div>
        ),
    },
    {
        active: "dim",
        icon: (
            <svg viewBox="0 0 32 32" className="w-8 h-8">
                <circle cx="16" cy="16" r="14.5" fill="#d6d2cb" stroke="#6e767c" strokeWidth="2.5" />
                <path d="M9 7 L20 23" stroke="#c8352b" strokeWidth="2" />
                <path d="M25 13 A10 10 0 0 1 22 24" stroke="#d07838" strokeWidth="3" fill="none" />
            </svg>
        ),
    },
    {
        active: "dim",
        icon: (
            <svg viewBox="0 0 32 32" className="w-8 h-8">
                <path d="M2 11 L14 3 L20 20 L8 23 Z" fill="#9dd583" />
                <rect x="8" y="8" width="14" height="18" fill="#b5d5f2" />
                <path d="M12 9 L28 5 L32 24 L16 29 Z" fill="#f7e06a" />
            </svg>
        ),
    },
    {
        active: "dim",
        icon: (
            <svg viewBox="0 0 28 28" className="w-[28px] h-[27px]">
                <rect width="28" height="28" fill="#b80a0a" />
                <path d="M4 24 C10 18 14 8 13 3 C11 2 11 8 15 13 C18 17 23 18 26 17 C22 14 10 16 4 24 Z" fill="none" stroke="#fff" strokeWidth="1.8" />
            </svg>
        ),
    },
    {
        active: "dim",
        icon: (
            <svg viewBox="0 0 32 32" className="w-8 h-8">
                <rect x="1" y="7" width="6" height="17" fill="#c9cdd0" />
                <path d="M6 5 L30 2 V22 L6 25 Z" fill="#d8dde2" />
                <path d="M8 7 L28 4.5 V20 L8 23 Z" fill="#f4f8fb" />
                <path d="M9 17 L13 16 L15 10 L17 17 L21 14 L22 9 L24 15 L27 14" fill="none" stroke="#3a8bd8" strokeWidth="1.1" />
                <ellipse cx="19" cy="28" rx="8" ry="2.5" fill="#c9cdd0" />
            </svg>
        ),
    },
];

function Taskbar() {
    return (
        <div className="relative h-[40px] bg-[radial-gradient(circle,rgba(255,255,255,0.3)_0.6px,transparent_1.2px),radial-gradient(circle,rgba(255,255,255,0.18)_0.6px,transparent_1.2px),linear-gradient(to_right,#505257,#585c64_50%,#525459)] bg-[length:47px_29px,31px_17px,100%_100%] flex items-center pl-[15px] shrink-0 text-white font-['Open_Sans',sans-serif]">
            {taskbarIcons.map((item, i) => (
                <div key={i} className="w-[62px] h-[40px] flex items-center justify-center shrink-0">
                    <div
                        className={
                            item.active === "bright"
                                ? "w-[58px] h-[38px] flex items-center justify-center border border-white bg-white/40"
                                : item.active === "dim"
                                  ? "w-[58px] h-[38px] flex items-center justify-center border border-white/30 bg-white/15"
                                  : "w-[58px] h-[38px] flex items-center justify-center"
                        }
                    >
                        {item.icon}
                    </div>
                </div>
            ))}

            <div className="ml-[232px] flex items-center gap-[8px]">
                <svg viewBox="0 0 16 16" className="w-4 h-4">
                    <circle cx="8" cy="8" r="8" fill="#f08a1a" />
                    <path d="M4.5 11 A4 4 0 1 1 11.5 11" fill="none" stroke="#fff" strokeWidth="2" />
                </svg>
                <svg viewBox="0 0 16 16" className="w-4 h-4">
                    <ellipse cx="8" cy="8" rx="6.5" ry="8" fill="#0a3a7a" />
                    <path d="M5 5 L11 11 L8 13.5 V2.5 L11 5 L5 11" fill="none" stroke="#fff" strokeWidth="1.2" />
                </svg>
                <svg viewBox="0 0 16 16" className="w-4 h-4">
                    <rect y="2" width="16" height="12" fill="#0e4f96" />
                    <path d="M3 5 H7 V11 H3 Z M9 5 H13 V11 H9 Z" fill="#fff" />
                </svg>
                <SpotifyIcon />
                <svg viewBox="0 0 16 16" className="w-4 h-4">
                    <rect x="3.5" y="2.5" width="10" height="11" fill="#5e5e5e" />
                    <path d="M13.5 2 V13.5 H3" fill="none" stroke="#fff" />
                </svg>
                <svg viewBox="0 0 16 16" className="w-4 h-4">
                    <path d="M2.5 1 V15" stroke="#fff" strokeWidth="1.2" />
                    <path d="M3 2 H9 L10 4 H15 L13 9 H8 L7 7 H3 Z" fill="#eee" />
                </svg>
                <svg viewBox="0 0 16 16" className="w-4 h-4">
                    <rect x="8" y="2.5" width="7" height="12" fill="none" stroke="#fff" strokeWidth="1.3" />
                    <rect x="10" y="1" width="3" height="1.5" fill="#fff" />
                    <path d="M2 1 V4 M5 1 V4 M1 4 H6 V8 H1 Z M3.5 8 V15" stroke="#fff" strokeWidth="1.1" fill="#fff" />
                </svg>
                <svg viewBox="0 0 16 16" className="w-4 h-4">
                    <rect x="1" y="11" width="2" height="2" fill="#fff" />
                    <rect x="4" y="9" width="2" height="4" fill="#fff" />
                    <rect x="7" y="7" width="2" height="6" fill="#fff" />
                    <rect x="10" y="5" width="2" height="8" fill="#888" />
                    <rect x="13" y="3" width="2" height="10" fill="#888" />
                </svg>
                <svg viewBox="0 0 16 16" className="w-4 h-4">
                    <path d="M1 5.5 H5 L9 2 V14 L5 10.5 H1 Z" fill="#ddd" />
                    <path d="M11 6 Q12.5 8 11 10" fill="none" stroke="#bbb" />
                </svg>
                <svg viewBox="0 0 16 16" className="w-4 h-4">
                    <path d="M4 1 L8 4 L4 7 L0 4 Z M12 1 L16 4 L12 7 L8 4 Z M4 7 L8 10 L4 13 L0 10 Z M12 7 L16 10 L12 13 L8 10 Z" fill="#b9d6f0" />
                    <circle cx="12" cy="12" r="4" fill="#2ca24a" />
                    <path d="M10 12 L11.5 13.5 L14 10.5" fill="none" stroke="#fff" strokeWidth="1.2" />
                </svg>
            </div>
            <span className="ml-[14px] text-[12px] text-[#eee]">ENG</span>
            <div className="ml-[11px] w-[60px] text-center text-[12px] leading-[17px] text-[#eee]">
                <div>6:34 PM</div>
                <div>6/4/2014</div>
            </div>
        </div>
    );
}

export default function App() {
    return (
        <div className="w-[1600px] h-[900px] flex flex-col overflow-hidden bg-white">
            <TabStrip />
            <NavBar />
            <BookmarksBar />
            <AccountHeader />
            <MainContent />
            <Taskbar />
        </div>
    );
}
